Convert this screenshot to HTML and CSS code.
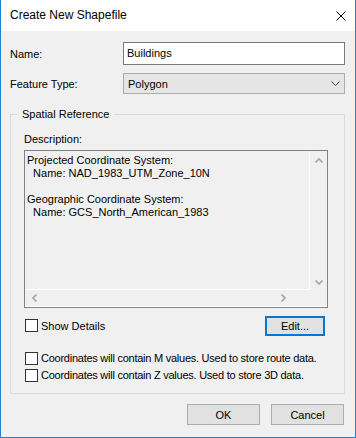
FILE: index.html
```html
<!DOCTYPE html>
<html lang="en">
<head>
  <meta charset="UTF-8" />
  <title>Create New Shapefile</title>
  <link rel="stylesheet" href="styles.css">
</head>
<body>
  <div class="window">
    <div class="titlebar">
      <span class="title">Create New Shapefile</span>
      <svg class="close" width="10" height="10" viewBox="0 0 10 10">
        <path d="M0.5 0.5L9.5 9.5M9.5 0.5L0.5 9.5" stroke="#000" stroke-width="1" fill="none"/>
      </svg>
    </div>

    <div class="content">
      <div class="form-row name-row">
        <span class="label">Name:</span>
        <div class="textinput">Buildings</div>
      </div>
      <div class="form-row type-row">
        <span class="label">Feature Type:</span>
        <div class="select">
          <span>Polygon</span>
          <svg width="9" height="5" viewBox="0 0 9 5">
            <polyline points="0.5,0.5 4.5,4.5 8.5,0.5" stroke="#444" stroke-width="1" fill="none"/>
          </svg>
        </div>
      </div>

      <fieldset class="group">
        <legend>Spatial Reference</legend>
        <div class="desc-label">Description:</div>
        <div class="desc-box">
          <div class="desc-text">Projected Coordinate System:
  Name: NAD_1983_UTM_Zone_10N

Geographic Coordinate System:
  Name: GCS_North_American_1983</div>
          <div class="vscroll">
            <svg width="8" height="5" viewBox="0 0 8 5">
              <polyline points="0.5,4.5 4,1 7.5,4.5" stroke="#a6a6a6" stroke-width="1.6" fill="none"/>
            </svg>
            <svg width="8" height="5" viewBox="0 0 8 5">
              <polyline points="0.5,0.5 4,4 7.5,0.5" stroke="#a6a6a6" stroke-width="1.6" fill="none"/>
            </svg>
          </div>
          <div class="hscroll">
            <svg width="5" height="8" viewBox="0 0 5 8">
              <polyline points="4.5,0.5 1,4 4.5,7.5" stroke="#a6a6a6" stroke-width="1.6" fill="none"/>
            </svg>
            <svg width="5" height="8" viewBox="0 0 5 8">
              <polyline points="0.5,0.5 4,4 0.5,7.5" stroke="#a6a6a6" stroke-width="1.6" fill="none"/>
            </svg>
          </div>
          <div class="corner"></div>
        </div>

        <div class="details-row">
          <div class="check details-check"><span class="box"></span>Show Details</div>
          <div class="button default edit">Edit...</div>
        </div>

        <div class="check option first"><span class="box"></span>Coordinates will contain M values. Used to store route data.</div>
        <div class="check option"><span class="box"></span>Coordinates will contain Z values. Used to store 3D data.</div>
      </fieldset>

      <div class="buttons">
        <div class="button">OK</div>
        <div class="button">Cancel</div>
      </div>
    </div>
  </div>
</body>
</html>
```

FILE: styles.css
```css
* {
  box-sizing: border-box;
  margin: 0;
  padding: 0;
}

body {
  font-family: 'Liberation Sans', Arial, sans-serif;
  font-size: 11px;
  color: #000;
  background: #fff;
}

.window {
  width: 356px;
  height: 438px;
  background: #f0f0f0;
  border: 1px solid #1883d7;
  border-top: none;
  display: flex;
  flex-direction: column;
}

.titlebar {
  height: 31px;
  background: #fff;
  display: flex;
  align-items: center;
  justify-content: space-between;
  padding: 0 9px 0 9px;
}

.title {
  font-size: 12px;
  line-height: 15px;
}

.close {
  display: block;
  margin-top: 1px;
}

.content {
  padding: 11px 10px 0 9px;
}

.form-row {
  display: grid;
  grid-template-columns: 113px 1fr;
  align-items: center;
}

.name-row {
  height: 23px;
  margin-bottom: 8px;
}

.type-row {
  height: 21px;
}

.textinput {
  height: 23px;
  background: #fff;
  border: 1px solid #7a7a7a;
  padding-left: 3px;
  line-height: 21px;
}

.select {
  height: 21px;
  background: #e5e5e5;
  border: 1px solid #adadad;
  padding: 0 4px 0 4px;
  display: flex;
  align-items: center;
  justify-content: space-between;
}

.select svg {
  display: block;
}

/* group box */
.group {
  margin-top: 13px;
  border: 1px solid #dcdcdc;
  padding: 0 16px 9px 13px;
}

.group legend {
  margin-left: -7px;
  padding: 0 5px;
  line-height: 15px;
}

.desc-label {
  margin-top: 10px;
  line-height: 15px;
}

.desc-box {
  margin-top: 3px;
  height: 158px;
  border: 1px solid #828282;
  box-shadow: inset 0 -1px 0 #fff;
  display: grid;
  grid-template-columns: 1fr 18px;
  grid-template-rows: 1fr 18px;
}

.desc-text {
  white-space: pre;
  line-height: 13px;
  padding: 3px 0 0 2px;
  overflow: hidden;
}

.vscroll {
  border-left: 1px solid #fff;
  display: flex;
  flex-direction: column;
  justify-content: space-between;
  align-items: center;
  padding: 7px 0 4px 0;
}

.hscroll {
  border-top: 1px solid #fff;
  display: flex;
  justify-content: space-between;
  align-items: center;
  padding: 0 23px 1px 7px;
}

.vscroll svg,
.hscroll svg {
  display: block;
}

.details-row {
  margin-top: 8px;
  height: 20px;
  display: flex;
  align-items: center;
  justify-content: space-between;
}

.check {
  display: flex;
  align-items: center;
  line-height: 15px;
  white-space: nowrap;
}

.box {
  width: 13px;
  height: 13px;
  background: #fff;
  border: 1px solid #333;
  margin: 0 3px 0 1px;
  flex: none;
}

.details-check .box {
  margin-top: -2px;
}

.option {
  height: 17px;
  letter-spacing: -0.25px;
}

.option.first {
  margin-top: 14px;
}

.button {
  width: 73px;
  height: 21px;
  background: #e1e1e1;
  border: 1px solid #adadad;
  display: flex;
  align-items: center;
  justify-content: center;
}

.button.default {
  border: 2px solid #0078d7;
}

.edit {
  width: 60px;
  height: 20px;
  margin-right: 3px;
}

.buttons {
  margin-top: 10px;
  display: flex;
  justify-content: flex-end;
  gap: 11px;
  padding-right: 1px;
}
```
